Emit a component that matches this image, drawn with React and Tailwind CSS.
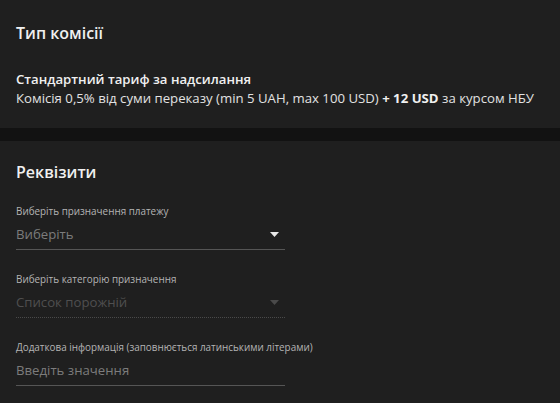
const font = { fontFamily: '"Open Sans", "Noto Sans", sans-serif' };

function Caret({ disabled }) {
  return (
    <svg width="9" height="5" viewBox="0 0 9 5" className={disabled ? 'text-[#4a4a4a]' : 'text-[#e8e8e8]'}>
      <path d="M0 0h9L4.5 5z" fill="currentColor" />
    </svg>
  );
}

function Field({ label, value, select, disabled }) {
  return (
    <div className="w-[269px]">
      <div className="mb-[2px] whitespace-nowrap text-[9.9px] leading-[14px] text-[#b4b4b4]">{label}</div>
      <div
        className={
          'flex items-center justify-between h-[30px] pr-[6px] border-b ' +
          (disabled ? 'border-dotted border-[#4a4a4a]' : 'border-[#555555]')
        }
      >
        <span className={'text-[13.2px] ' + (disabled ? 'text-[#4f4f4f]' : 'text-[#7c7c7c]')}>{value}</span>
        {select && <Caret disabled={disabled} />}
      </div>
    </div>
  );
}

export default function App() {
  return (
    <div className="w-[560px] h-[403px] overflow-hidden bg-[#121212] text-[#e2e2e2]" style={font}>
      <section className="h-[128px] bg-[#1f1f1f] px-4 pt-[21px]">
        <h2 className="text-[16px] leading-[24px] font-semibold text-[#f0f0f0]">Тип комісії</h2>
        <div className="mt-[25px] text-[13.2px] leading-[19px]">
          <div className="font-semibold text-[#f0f0f0]">Стандартний тариф за надсилання</div>
          <div>
            Комісія 0,5% від суми переказу (min 5 UAH, max 100 USD) <b className="font-bold text-[#f0f0f0]">+ 12 USD</b> за курсом НБУ
          </div>
        </div>
      </section>
      <section className="mt-[13px] h-[262px] bg-[#1f1f1f] px-4 pt-[19px]">
        <h2 className="text-[16px] leading-[24px] font-semibold text-[#f0f0f0]">Реквізити</h2>
        <div className="mt-[20px] flex flex-col gap-[22px]">
          <Field label="Виберіть призначення платежу" value="Виберіть" select />
          <Field label="Виберіть категорію призначення" value="Список порожній" select disabled />
          <Field label="Додаткова інформація (заповнюється латинськими літерами)" value="Введіть значення" />
        </div>
      </section>
    </div>
  );
}
